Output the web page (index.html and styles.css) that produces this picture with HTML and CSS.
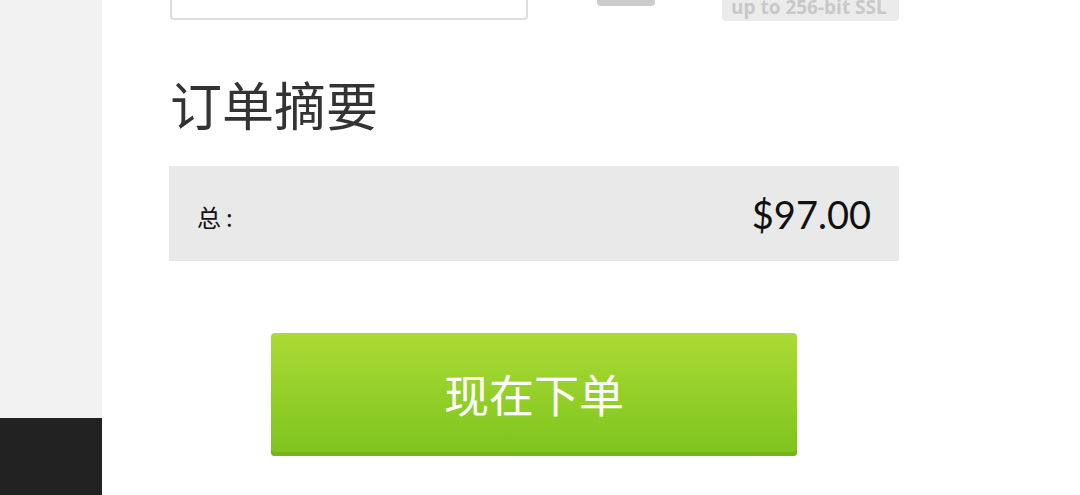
FILE: index.html
```html
<!DOCTYPE html>
<html lang="zh-CN">
  <head>
    <meta charset="UTF-8" />
    <meta name="viewport" content="width=device-width, initial-scale=1">
    <title>订单摘要</title>
    <link rel="stylesheet" href="styles.css">
  </head>
  <body>
    <div class="wrap">
      <div class="side">
        <div class="side_top"></div>
        <div class="side_bottom"></div>
      </div>
      <div class="main">
        <div class="pay_row">
          <input class="code_input" type="text" />
          <button class="apply_btn"></button>
          <span class="ssl_badge">up to 256-bit SSL</span>
        </div>
        <h2 class="sum_tit">订单摘要</h2>
        <div class="sum_box">
          <span class="sum_label">总:</span>
          <span class="sum_price">$97.00</span>
        </div>
        <div class="btn_area">
          <button class="order_btn">现在下单</button>
        </div>
      </div>
    </div>
  </body>
</html>
```

FILE: styles.css
```css
* {padding:0; margin:0; box-sizing: border-box;}
body, html {height: 100%; overflow: hidden;}
body {font-family: Lato, "Noto Sans CJK SC", sans-serif; background: #fff;}
.wrap {display: flex; height: 100%;}
.side {width: 102px; display: flex; flex-direction: column;}
.side_top {height: 418px; background: #f2f2f2;}
.side_bottom {flex: 1; background: #222;}
.main {flex: 1; padding-left: 67px;}
.pay_row {width: 732px; display: flex; align-items: flex-start; margin-top: -24px;}
.code_input {width: 358px; height: 44px; margin-left: 1px; border: 2px solid #ddd; border-radius: 4px; background: #fff;}
.apply_btn {width: 58px; height: 30px; margin-left: 69px; border: 0; border-radius: 4px; background: #ccc;}
.ssl_badge {margin-left: 67px; width: 177px; height: 45px; padding: 20px 0 0 9px; background: #ebebeb; border-radius: 4px; color: #c8c8c8; font-family: "Open Sans", sans-serif; font-weight: 700; font-size: 19px; line-height: 22px; white-space: nowrap;}
.sum_tit {margin-top: 53px; padding-left: 1px; font-size: 52px; font-weight: 400; line-height: 60px; color: #333; font-family: "Noto Sans CJK SC", sans-serif;}
.sum_box {width: 730px; height: 95px; margin-top: 32px; background: #e9e9e9; display: flex; align-items: center; justify-content: space-between; padding: 0 28px 0 28px;}
.sum_label {font-size: 24px; color: #111; font-family: "Noto Sans CJK SC", sans-serif; margin-top: 6px; letter-spacing: 5px;}
.sum_price {font-size: 38px; color: #111;}
.btn_area {width: 730px; padding-top: 72px; display: flex; justify-content: center;}
.order_btn {width: 526px; height: 123px; margin-left: 0; border: 0; border-radius: 4px; background: linear-gradient(#abdb34, #7dc31e); box-shadow: inset 0 -4px 0 #73b51b; color: #fff; font-size: 45px; font-family: "Noto Sans CJK SC", sans-serif; padding-bottom: 2px;}
```
